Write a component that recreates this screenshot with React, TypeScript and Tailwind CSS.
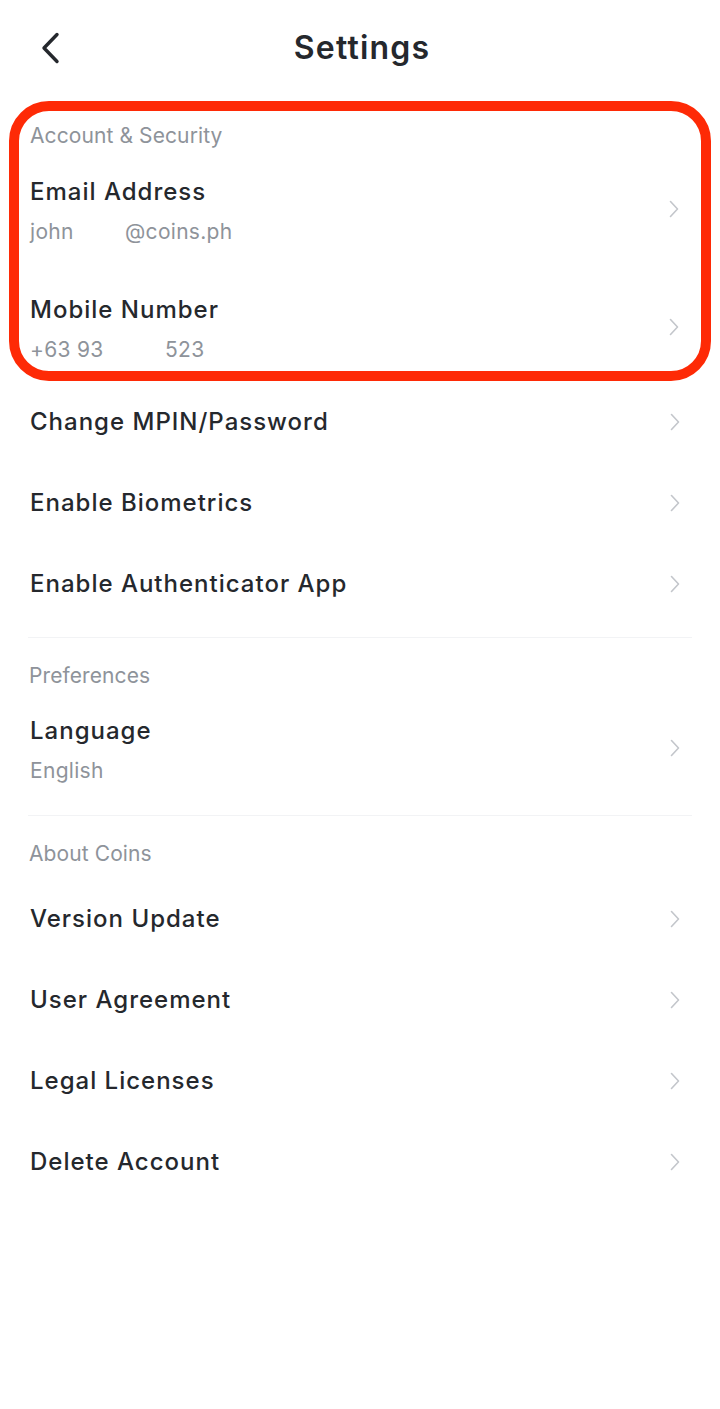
import { ReactNode } from "react";

const font = { fontFamily: "Inter, 'Noto Sans', sans-serif" };

function Chevron() {
  return (
    <svg width="10" height="18" viewBox="0 0 10 18" fill="none">
      <path
        d="M1.5 1.5L8.5 9L1.5 16.5"
        stroke="#c3c6cb"
        strokeWidth="1.6"
        strokeLinecap="round"
        strokeLinejoin="round"
      />
    </svg>
  );
}

function SectionLabel({ children }: { children: ReactNode }) {
  return (
    <div className="h-[49px] flex items-center text-[21px] text-[#8e939a] tracking-[0.1px]">
      {children}
    </div>
  );
}

function Row({ title }: { title: string }) {
  return (
    <div className="h-[81px] flex items-center justify-between pr-[12px]">
      <span className="text-[24px] font-medium text-[#25282d] tracking-[1px]">
        {title}
      </span>
      <Chevron />
    </div>
  );
}

function DetailRow({
  title,
  left,
  right,
  gap,
  height,
}: {
  title: string;
  left: string;
  right?: string;
  gap?: string;
  height: string;
}) {
  return (
    <div className={`${height} flex items-start justify-between pr-[12px] pt-[11px]`}>
      <div className="flex flex-col">
        <span className="leading-[40px] text-[24px] font-medium text-[#25282d] tracking-[1px]">
          {title}
        </span>
        <span className="leading-[40px] text-[21px] text-[#8e939a] tracking-[0.3px] flex">
          <span className={gap}>{left}</span>
          {right && <span>{right}</span>}
        </span>
      </div>
      <div className="mt-[28px]">
        <Chevron />
      </div>
    </div>
  );
}

export default function App() {
  return (
    <div className="w-[720px] min-h-[1409px] bg-white" style={font}>
      <div className="h-[96px] relative flex items-center justify-center">
        <svg
          className="absolute left-[40px] top-[32px]"
          width="22"
          height="32"
          viewBox="0 0 22 32"
          fill="none"
        >
          <path
            d="M17 2.5L4 16L17 29.5"
            stroke="#25282d"
            strokeWidth="3.4"
            strokeLinecap="round"
            strokeLinejoin="round"
          />
        </svg>
        <h1 className="text-[32px] font-semibold text-[#25282d] tracking-[1.2px] pl-[4px]">
          Settings
        </h1>
      </div>

      <div className="mt-[5px] mx-[9px] border-[10px] border-[#fe2a06] rounded-[40px] pl-[11px] pr-[10px]">
        <div className="h-[50px] flex items-center text-[21px] text-[#8e939a] tracking-[0.1px]">
          Account &amp; Security
        </div>
        <DetailRow
          title="Email Address"
          left="john"
          right="@coins.ph"
          gap="w-[95px]"
          height="h-[118px]"
        />
        <DetailRow
          title="Mobile Number"
          left="+63 93"
          right="523"
          gap="w-[135px]"
          height="h-[92px]"
        />
      </div>

      <div className="px-[28px]">
        <div className="pl-[2px]">
          <Row title="Change MPIN/Password" />
          <Row title="Enable Biometrics" />
          <Row title="Enable Authenticator App" />
        </div>
        <div className="mt-[13px] h-px bg-[#f2f3f5]" />
        <div className="pt-[13px] pl-[1px]">
          <SectionLabel>Preferences</SectionLabel>
        </div>
        <div className="pl-[2px]">
          <DetailRow title="Language" left="English" height="h-[102px]" />
        </div>
        <div className="mt-[13px] h-px bg-[#f2f3f5]" />
        <div className="pt-[13px] pl-[1px]">
          <SectionLabel>About Coins</SectionLabel>
        </div>
        <div className="pl-[2px]">
          <Row title="Version Update" />
          <Row title="User Agreement" />
          <Row title="Legal Licenses" />
          <Row title="Delete Account" />
        </div>
      </div>
    </div>
  );
}
